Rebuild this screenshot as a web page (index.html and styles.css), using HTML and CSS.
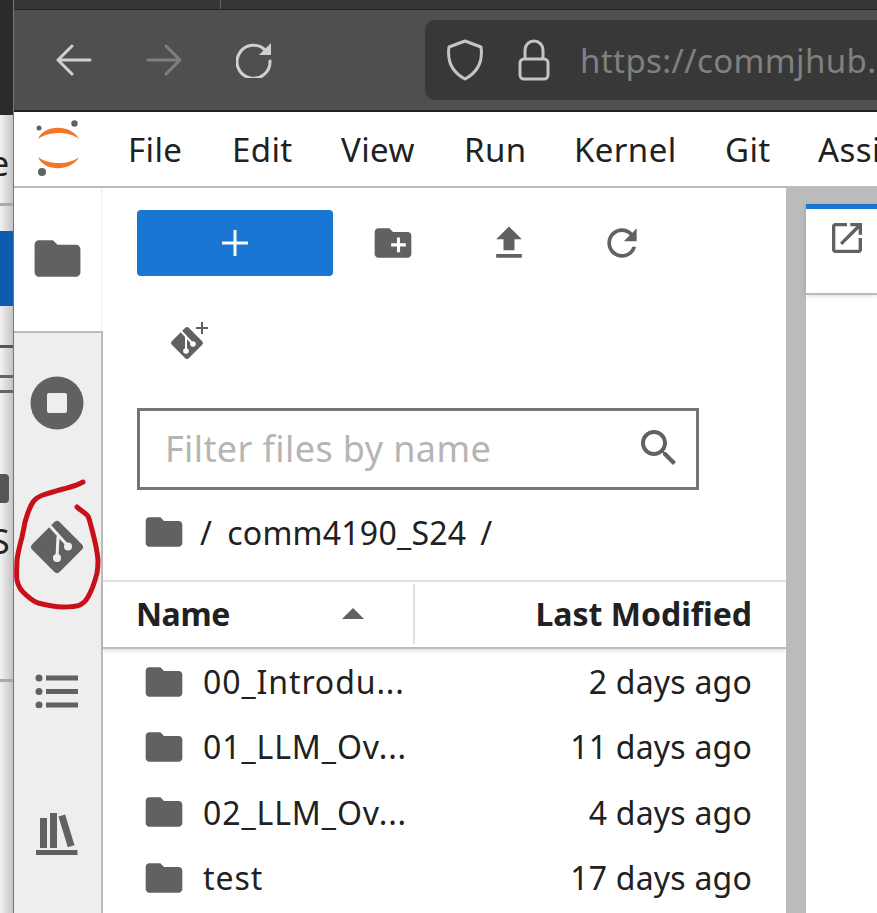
FILE: index.html
```html
<!doctype html>
<html lang="en">
<head>
	<meta charset="UTF-8" />
	<title>JupyterLab</title>
	<link rel="stylesheet" href="styles.css">
</head>
<body>
	<svg class="defs" width="0" height="0">
		<symbol id="folder" viewBox="0 0 24 24"><path d="M10 4H4c-1.1 0-1.99.9-1.99 2L2 18c0 1.1.9 2 2 2h16c1.1 0 2-.9 2-2V8c0-1.1-.9-2-2-2h-8l-2-2z"/></symbol>
	</svg>

	<!-- other window peeking out on the left -->
	<div class="behind">
		<div class="b-dark"></div>
		<div class="b-light">
			<span class="b-e">e</span>
			<div class="b-line l1"></div>
			<div class="b-blue"></div>
			<div class="b-line l2"></div>
			<div class="b-line l3"></div>
			<div class="b-line l4"></div>
			<div class="b-chip"></div>
			<span class="b-s">S</span>
			<div class="b-line l5"></div>
		</div>
	</div>

	<div class="win">
		<div class="tabstrip"><div class="tabsep"></div></div>
		<div class="nav">
			<svg class="nav-ico" width="36" height="36" viewBox="0 0 36 36"><path d="M34 18H3M16 4L2 18l14 14" fill="none" stroke="#d0d0d0" stroke-width="3" stroke-linecap="round" stroke-linejoin="round"/></svg>
			<svg class="nav-ico" width="36" height="36" viewBox="0 0 36 36"><path d="M2 18h31M20 4l14 14-14 14" fill="none" stroke="#808080" stroke-width="3" stroke-linecap="round" stroke-linejoin="round"/></svg>
			<svg class="nav-ico" width="36" height="36" viewBox="0 0 36 36"><path d="M30 9A16.5 16.5 0 1 0 34 19" fill="none" stroke="#d0d0d0" stroke-width="3" stroke-linecap="round"/><path d="M35 1v12H23z" fill="#d0d0d0"/></svg>
			<div class="url">
				<svg width="38" height="42" viewBox="0 0 38 42"><path d="M19 2L35 8c2 14-3 25-16 32C6 33 1 22 3 8z" fill="none" stroke="#c4c4c4" stroke-width="3" stroke-linejoin="round"/></svg>
				<svg class="lock" width="32" height="42" viewBox="0 0 32 42"><rect x="2" y="20" width="28" height="20" rx="4" fill="none" stroke="#c4c4c4" stroke-width="3"/><path d="M7 20V11a9 9 0 0 1 18 0v9" fill="none" stroke="#c4c4c4" stroke-width="3"/></svg>
				<span class="url-text">https://commjhub.</span>
			</div>
		</div>

		<div class="menubar">
			<svg class="logo" width="50" height="58" viewBox="0 0 50 58">
				<path d="M4 19C10 4 37 4 45 19C35 11 15 11 4 19z" fill="#f37726"/>
				<path d="M4 37C10 52 37 52 45 37C35 45 15 45 4 37z" fill="#f37726"/>
				<circle cx="5" cy="8" r="2.5" fill="#616161"/>
				<circle cx="40.500" cy="3.500" r="3.200" fill="#616161"/>
				<circle cx="8" cy="52" r="4" fill="#616161"/>
			</svg>
			<span class="m-item i-file">File</span>
			<span class="m-item i-edit">Edit</span>
			<span class="m-item i-view">View</span>
			<span class="m-item i-run">Run</span>
			<span class="m-item i-kernel">Kernel</span>
			<span class="m-item i-git">Git</span>
			<span class="m-item i-assi">Assistant</span>
		</div>

		<div class="main">
			<div class="side">
				<div class="side-active">
					<svg class="ico-fill" width="55" height="55"><use href="#folder"/></svg>
				</div>
				<div class="side-rest">
					<div class="side-btn">
						<svg width="54" height="54" viewBox="0 0 54 54"><circle cx="27" cy="27" r="26.500" fill="#616161"/><rect x="17" y="17" width="20" height="20" rx="2" fill="#eee"/></svg>
					</div>
					<div class="side-btn">
						<svg width="56" height="56" viewBox="0 0 56 56">
							<rect x="8.500" y="8.500" width="39" height="39" rx="4" transform="rotate(45 28 28)" fill="#616161"/>
							<path d="M21 7L39 27M29 17.500L28 38" fill="none" stroke="#eee" stroke-width="3"/>
							<circle cx="39" cy="27.500" r="4" fill="#eee"/>
							<circle cx="28" cy="39" r="4" fill="#eee"/>
						</svg>
					</div>
					<div class="side-btn">
						<svg width="46" height="34" viewBox="0 0 46 34"><g fill="#616161"><circle cx="5" cy="4" r="3.500"/><circle cx="5" cy="17.500" r="3.500"/><circle cx="5" cy="31" r="3.500"/><rect x="12" y="1.500" width="32" height="5"/><rect x="12" y="15" width="32" height="5"/><rect x="12" y="28.500" width="32" height="5"/></g></svg>
					</div>
					<div class="side-btn">
						<svg class="lib" width="44" height="44" viewBox="0 0 44 44"><g fill="#616161"><rect x="5" y="6" width="7" height="30"/><rect x="15" y="1" width="7" height="35"/><rect x="28" y="3" width="7" height="32" transform="rotate(-17 31 19)"/><rect x="1" y="38" width="41.500" height="5"/></g></svg>
					</div>
				</div>
			</div>

			<div class="panel">
				<div class="fb-tools">
					<div class="new-btn">
						<svg width="26" height="26" viewBox="0 0 26 26"><path d="M13 0v26M0 13h26" stroke="#fff" stroke-width="3"/></svg>
					</div>
					<div class="tool t-newdir">
						<svg class="ico-fill" width="44" height="44" viewBox="0 0 24 24"><path d="M10 4H4c-1.1 0-1.99.9-1.99 2L2 18c0 1.1.9 2 2 2h16c1.1 0 2-.9 2-2V8c0-1.100-.9-2-2-2h-8l-2-2z"/><path d="M15 9v8M11 13h8" stroke="#fff" stroke-width="1.700"/></svg>
					</div>
					<div class="tool t-upload">
						<svg class="ico-fill" width="44" height="44" viewBox="0 0 24 24"><path d="M9 16h6v-6h4l-7-7-7 7h4zm-4 2h14v2H5z"/></svg>
					</div>
					<div class="tool t-refresh">
						<svg class="ico-fill" width="44" height="44" viewBox="0 0 24 24"><path d="M17.650 6.350C16.200 4.900 14.210 4 12 4c-4.420 0-7.990 3.580-7.990 8s3.570 8 7.990 8c3.730 0 6.840-2.550 7.730-6h-2.080c-.82 2.330-3.040 4-5.650 4-3.310 0-6-2.690-6-6s2.690-6 6-6c1.660 0 3.140.69 4.220 1.780L13 11h7V4l-2.350 2.350z"/></svg>
					</div>
				</div>
				<div class="clone">
					<svg width="40" height="40" viewBox="0 0 40 40">
						<rect x="6" y="11" width="24" height="24" rx="2.500" transform="rotate(45 18 23)" fill="#616161"/>
						<path d="M11 10L23 23M17 17L17 32" fill="none" stroke="#fff" stroke-width="2"/>
						<circle cx="24" cy="24" r="2.800" fill="#fff"/>
						<circle cx="17" cy="31" r="2.800" fill="#fff"/>
						<path d="M33 2v12M27 8h12" stroke="#616161" stroke-width="2"/>
					</svg>
				</div>
				<div class="filter">
					<span class="filter-text">Filter files by name</span>
					<svg class="ico-fill" width="48" height="48" viewBox="0 0 24 24"><path d="M15.500 14h-.79l-.28-.27C15.410 12.590 16 11.110 16 9.500 16 5.910 13.090 3 9.500 3S3 5.910 3 9.500 5.910 16 9.500 16c1.610 0 3.090-.59 4.230-1.570l.27.28v.79l5 4.990L20.490 19l-4.990-5zm-6 0C7.010 14 5 11.990 5 9.500S7.010 5 9.500 5 14 7.010 14 9.500 11.990 14 9.500 14z"/></svg>
				</div>
				<div class="crumbs">
					<svg class="ico-fill" width="44" height="44"><use href="#folder"/></svg>
					<span class="sl1">/</span>
					<span class="cr-name">comm4190_S24</span>
					<span class="sl2">/</span>
				</div>
				<div class="list-head">
					<div class="h-name"><span>Name</span><i class="caret"></i></div>
					<div class="h-date">Last Modified</div>
				</div>
				<div class="row">
					<svg class="ico-fill" width="44" height="44"><use href="#folder"/></svg>
					<span class="r-name">00_Introdu...</span><span class="r-date">2 days ago</span>
				</div>
				<div class="row">
					<svg class="ico-fill" width="44" height="44"><use href="#folder"/></svg>
					<span class="r-name">01_LLM_Ov...</span><span class="r-date">11 days ago</span>
				</div>
				<div class="row">
					<svg class="ico-fill" width="44" height="44"><use href="#folder"/></svg>
					<span class="r-name">02_LLM_Ov...</span><span class="r-date">4 days ago</span>
				</div>
				<div class="row">
					<svg class="ico-fill" width="44" height="44"><use href="#folder"/></svg>
					<span class="r-name">test</span><span class="r-date">17 days ago</span>
				</div>
			</div>

			<div class="splitter"></div>

			<div class="doc">
				<div class="doc-gap"></div>
				<div class="doc-tab">
					<svg class="ico-fill" width="40" height="40" viewBox="0 0 24 24"><path d="M19 19H5V5h7V3H5c-1.110 0-2 .9-2 2v14c0 1.100.89 2 2 2h14c1.100 0 2-.9 2-2v-7h-2v7zM14 3v2h3.590l-9.830 9.830 1.410 1.410L19 6.410V10h2V3h-7z"/></svg>
				</div>
			</div>
		</div>
	</div>

	<!-- red pen circle drawn over the screenshot -->
	<svg class="scribble" width="110" height="140" viewBox="10 475 110 140">
		<path d="M83 482C76 486 70 487 63 489C56 491 49 493 43 495C38 497 35 499 33 502C29 508 27 515 25 522C24 528 23 532 22 537C20 545 18 552 17 560C17 567 16 574 17 580C18 585 20 589 23 592C28 597 32 601 38 603C46 605 55 607 63 607C69 607 75 607 80 605C84 603 86 601 88 597C92 590 95 581 97 573C98 568 98 564 98 560C97 547 93 534 90 522C89 519 89 517 87 515C84 512 80 510 77 507" fill="none" stroke="#c8101a" stroke-width="5" stroke-linecap="round" stroke-linejoin="round"/>
	</svg>
</body>
</html>
```

FILE: styles.css
```css
body{margin: 0;width: 877px;height: 913px;overflow: hidden;display: flex;position: relative;font-family: "Noto Sans","Open Sans",sans-serif;color: #212121;background: #fff;}
svg{display: block;flex: none;}
.defs{position: absolute;}
.ico-fill{fill: #616161;}

/* window behind */
.behind{width: 13px;flex: none;display: flex;flex-direction: column;border-right: 1px solid #777;overflow: hidden;}
.b-dark{height: 115px;background: #2b2b2b;}
.b-light{flex: 1;position: relative;background: linear-gradient(to right,#f2f2f2,#c4c4c4);}
.b-e,.b-s{position: absolute;font-size: 34px;line-height: 40px;color: #222;}
.b-e{left: -10px;top: 28px;}
.b-s{left: -9px;top: 406px;}
.b-line{position: absolute;left: 0;right: 0;height: 3px;background: #8a8a8a;}
.l1{top: 88px;background: #aaa;}
.l2{top: 230px;background: #555;}
.l3{top: 260px;background: #666;}
.l4{top: 275px;background: #666;}
.l5{top: 564px;background: #aaa;}
.b-blue{position: absolute;left: 0;right: 0;top: 116px;height: 75px;background: #0d5cb0;}
.b-chip{position: absolute;left: -6px;width: 15px;top: 359px;height: 29px;border-radius: 4px;background: #555;}

.win{flex: 1;min-width: 0;display: flex;flex-direction: column;}
.tabstrip{height: 9px;background: #363636;border-bottom: 1px solid #222;padding-left: 206px;}
.tabsep{width: 1px;height: 9px;background: #666;}

/* browser toolbar */
.nav{height: 100px;flex: none;background: #4f4f4f;display: flex;align-items: center;padding-left: 42px;box-sizing: border-box;}
.nav-ico{margin-right: 54px;}
.url{height: 80px;flex: 1;margin-left: 99px;background: #383838;border-radius: 10px 0 0 10px;display: flex;align-items: center;padding-left: 21px;min-width: 0;overflow: hidden;}
.lock{margin-left: 34px;}
.url-text{margin-left: 30px;font-size: 33px;letter-spacing: .4px;color: #808080;white-space: nowrap;}

/* jupyter menu */
.menubar{height: 74px;flex: none;border-top: 2px solid #222;border-bottom: 2px solid #bbb;background: #fff;display: flex;align-items: center;position: relative;}
.logo{margin-left: 20px;}
.m-item{font-size: 33px;letter-spacing: .4px;white-space: nowrap;position: absolute;top: 16px;line-height: 44px;}
.i-file{left: 114px;}
.i-edit{left: 218px;}
.i-view{left: 327px;}
.i-run{left: 450px;}
.i-kernel{left: 560px;}
.i-git{left: 711px;}
.i-assi{left: 804px;}

.main{flex: 1;display: flex;min-height: 0;}

/* left sidebar */
.side{width: 89px;flex: none;display: flex;flex-direction: column;}
.side-active{height: 143px;box-sizing: border-box;background: #fff;border-right: 1px solid #eee;margin-right: 1px;display: flex;justify-content: center;align-items: center;padding-bottom: 2px;}
.side-rest{flex: 1;background: #eee;border-top: 2px solid #bbb;border-right: 2px solid #bbb;}
.side-btn{height: 144px;display: flex;align-items: center;justify-content: center;padding-right: 1px;}
.side-btn:first-child{margin-top: -2px;}
.lib{margin-top: -2px;}

/* file browser */
.panel{width: 683px;flex: none;}
.fb-tools{height: 110px;box-sizing: border-box;padding-top: 22px;position: relative;}
.new-btn{margin-left: 34px;width: 196px;height: 66px;border-radius: 4px;background: #1976d2;display: flex;align-items: center;justify-content: center;}
.tool{position: absolute;top: 33px;}
.t-newdir{left: 268px;}
.t-upload{left: 384px;}
.t-refresh{left: 497px;}
.clone{height: 110px;padding-left: 66px;padding-top: 22px;box-sizing: border-box;}
.filter{margin-left: 34px;width: 562px;height: 82px;box-sizing: border-box;border: 3px solid #757575;display: flex;align-items: center;justify-content: space-between;padding: 0 13px 2px 25px;}
.filter-text{font-size: 36px;letter-spacing: .4px;color: #b5b5b5;white-space: nowrap;}
.crumbs{height: 90px;box-sizing: border-box;padding-bottom: 6px;display: flex;align-items: center;padding-left: 39px;font-size: 32px;letter-spacing: .25px;white-space: nowrap;}
.sl1{margin-left: 14px;}
.cr-name{margin-left: 15px;}
.sl2{margin-left: 14px;}
.list-head{height: 65px;border-top: 2px solid #e0e0e0;border-bottom: 2px solid #bbb;box-shadow: 0 2px 4px rgba(0,0,0,.12);display: flex;font-size: 32px;font-weight: 700;}
.h-name{width: 312px;margin: 2px 0 3px;box-sizing: border-box;padding: 0 49px 2px 33px;border-right: 2px solid #e0e0e0;display: flex;align-items: center;justify-content: space-between;letter-spacing: -.4px;}
.caret{width: 0;height: 0;border-left: 11px solid transparent;border-right: 11px solid transparent;border-bottom: 11px solid #616161;}
.h-date{flex: 1;text-align: right;padding-right: 34px;line-height: 63px;white-space: nowrap;}
.row{height: 65.300px;display: flex;align-items: center;padding-left: 39px;font-size: 32px;white-space: nowrap;}
.r-name{margin-left: 17px;width: 200px;letter-spacing: .9px;}
.r-date{width: 349px;text-align: right;letter-spacing: .2px;}

.splitter{width: 20px;flex: none;background: #bbb;}

.doc{flex: 1;min-width: 0;}
.doc-gap{height: 16px;background: #bbb;}
.doc-tab{height: 91px;box-sizing: border-box;border-top: 5px solid #1976d2;border-bottom: 2px solid #bbb;box-shadow: 0 1px 4px rgba(0,0,0,.15);padding: 9px 0 0 21px;}

.scribble{position: absolute;left: 10px;top: 475px;}
```
